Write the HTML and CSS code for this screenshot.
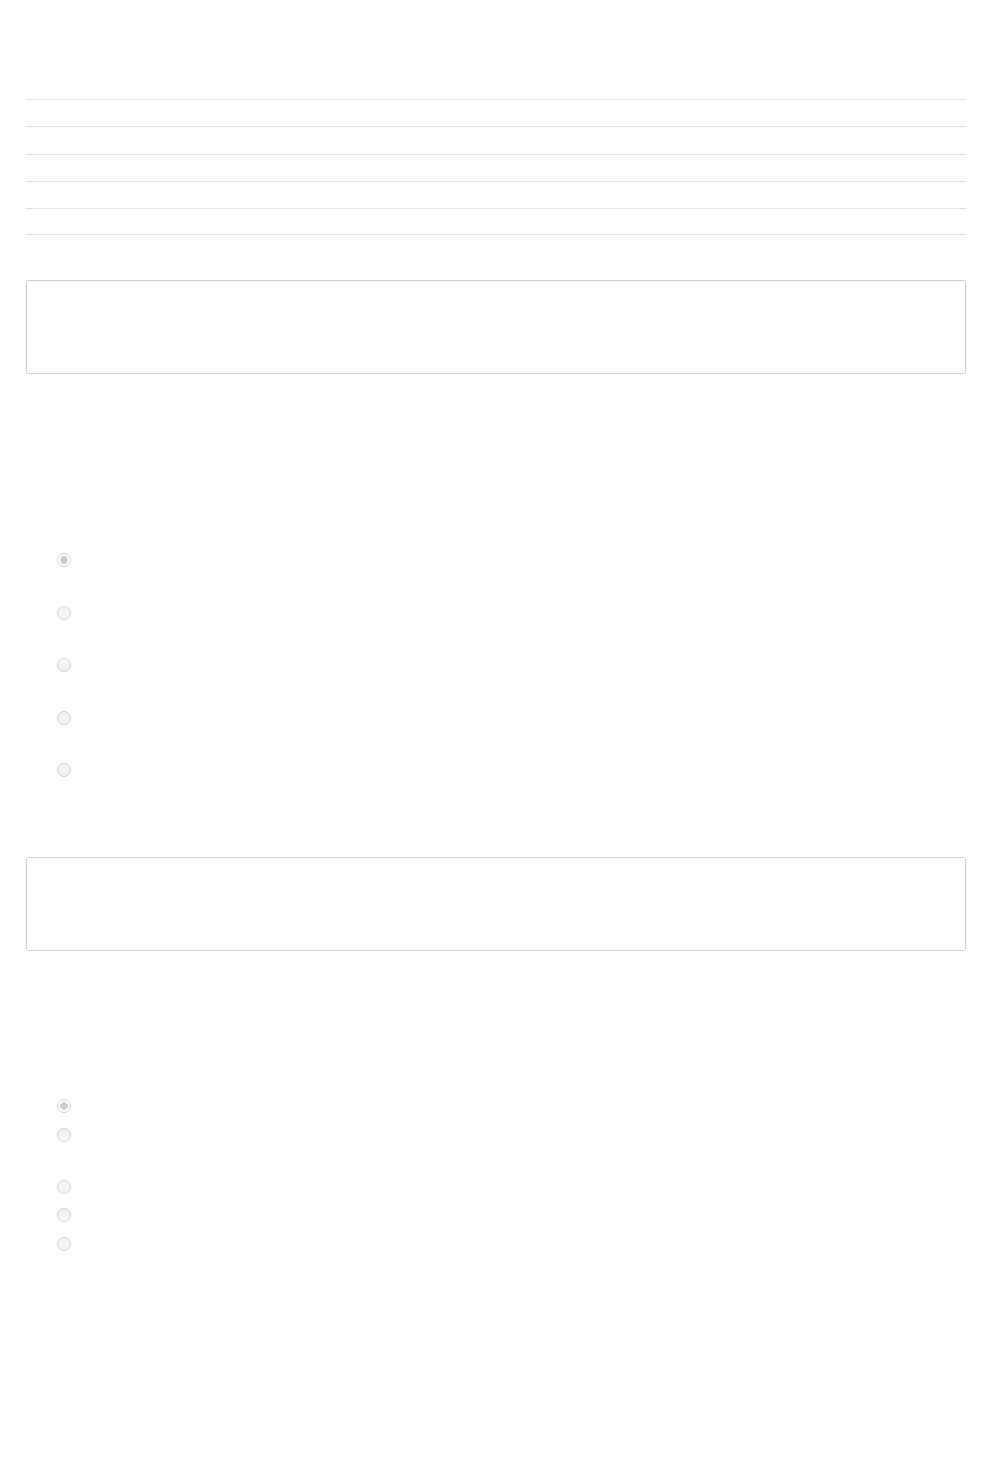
FILE: index.html
```html
<!DOCTYPE html>
<html lang="en">
<head>
<meta charset="utf-8">
<title>Form</title>
<link rel="stylesheet" href="styles.css">
</head>
<body>
<main class="page">
  <section class="table">
    <div class="row"></div>
    <div class="row"></div>
    <div class="row"></div>
    <div class="row"></div>
    <div class="row last"></div>
  </section>

  <div class="panel panel-first"></div>

  <ul class="choices choices-wide">
    <li class="choice"><input class="radio" type="radio" name="q1" checked disabled></li>
    <li class="choice"><input class="radio" type="radio" name="q1" disabled></li>
    <li class="choice"><input class="radio" type="radio" name="q1" disabled></li>
    <li class="choice"><input class="radio" type="radio" name="q1" disabled></li>
    <li class="choice"><input class="radio" type="radio" name="q1" disabled></li>
  </ul>

  <div class="panel panel-second"></div>

  <ul class="choices choices-tight">
    <li class="choice"><input class="radio" type="radio" name="q2" checked disabled></li>
    <li class="choice choice-tall"><input class="radio" type="radio" name="q2" disabled></li>
    <li class="choice"><input class="radio" type="radio" name="q2" disabled></li>
    <li class="choice"><input class="radio" type="radio" name="q2" disabled></li>
    <li class="choice"><input class="radio" type="radio" name="q2" disabled></li>
  </ul>
</main>
</body>
</html>
```

FILE: styles.css
```css
html, body {
  margin: 0;
  padding: 0;
  background: #ffffff;
  font-family: "Liberation Sans", Arial, sans-serif;
}

.page {
  padding: 0 26px;
  width: 940px;
  min-height: 1469px;
  box-sizing: content-box;
}

.table {
  padding-top: 99px;
}

.row {
  height: 27.25px;
  box-sizing: border-box;
  border-top: 1px solid #e0e0e6;
}

.row.last {
  border-bottom: 1px solid #e0e0e6;
}

.panel {
  height: 94px;
  box-sizing: border-box;
  border: 1px solid #d0d0dc;
  border-radius: 2px;
}

.panel-first {
  margin-top: 44.5px;
}

.panel-second {
  margin-top: 79.5px;
}

.choices {
  list-style: none;
  margin: 0;
  padding: 0 0 0 31px;
  display: flex;
  flex-direction: column;
}

.choices-wide {
  margin-top: 179.5px;
  gap: 38.5px;
}

.choices-tight {
  margin-top: 148px;
  gap: 14.75px;
}

.choice {
  height: 14px;
  display: flex;
}

.choice-tall {
  margin-bottom: 23.25px;
}

.radio {
  -webkit-appearance: none;
  appearance: none;
  margin: 0;
  width: 14px;
  height: 14px;
  box-sizing: border-box;
  border: 1.5px solid #cfcfcf;
  border-radius: 50%;
  background: #f5f5f5;
}

.radio:checked {
  background: radial-gradient(circle, #cdcdcd 0, #cdcdcd 3.6px, #ffffff 4.2px, #ffffff 100%);
}
```
